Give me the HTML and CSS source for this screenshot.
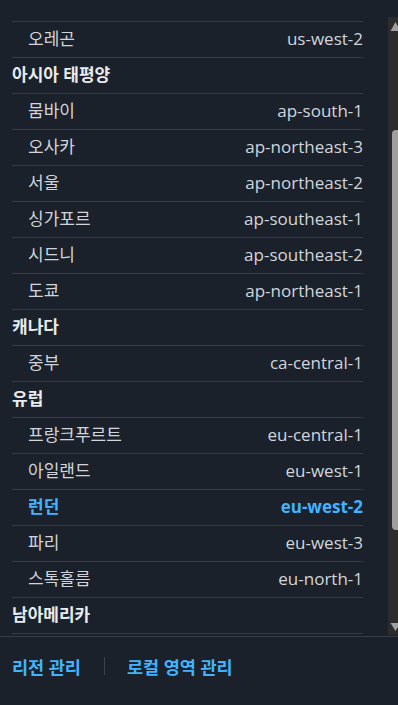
FILE: index.html
```html
<!DOCTYPE html>
<html lang="ko">
<head>
<meta charset="utf-8">
<link rel="stylesheet" href="styles.css">
</head>
<body>
<div class="panel">
  <div class="scroll-area">
    <ul class="list">
      <li class="row item"><span>오레곤</span><span class="code">us-west-2</span></li>
      <li class="row group">아시아 태평양</li>
      <li class="row item"><span>뭄바이</span><span class="code">ap-south-1</span></li>
      <li class="row item"><span>오사카</span><span class="code">ap-northeast-3</span></li>
      <li class="row item"><span>서울</span><span class="code">ap-northeast-2</span></li>
      <li class="row item"><span>싱가포르</span><span class="code">ap-southeast-1</span></li>
      <li class="row item"><span>시드니</span><span class="code">ap-southeast-2</span></li>
      <li class="row item"><span>도쿄</span><span class="code">ap-northeast-1</span></li>
      <li class="row group">캐나다</li>
      <li class="row item"><span>중부</span><span class="code">ca-central-1</span></li>
      <li class="row group">유럽</li>
      <li class="row item"><span>프랑크푸르트</span><span class="code">eu-central-1</span></li>
      <li class="row item"><span>아일랜드</span><span class="code">eu-west-1</span></li>
      <li class="row item selected"><span>런던</span><span class="code">eu-west-2</span></li>
      <li class="row item"><span>파리</span><span class="code">eu-west-3</span></li>
      <li class="row item"><span>스톡홀름</span><span class="code">eu-north-1</span></li>
      <li class="row group last">남아메리카</li>
    </ul>
    <div class="scrollbar">
      <svg class="arrow" width="10" height="16" viewBox="0 0 10 16"><polygon points="7.5,5 2.5,14 12.5,14" fill="#a0a0a0"/></svg>
      <div class="track-gap top-gap"></div>
      <div class="thumb"></div>
      <div class="track-gap"></div>
      <svg class="arrow" width="10" height="16" viewBox="0 0 10 16"><polygon points="2.5,4 12.5,4 7.5,12" fill="#a0a0a0"/></svg>
    </div>
  </div>
  <div class="footer">
    <a class="link">리전 관리</a>
    <span class="divider"></span>
    <a class="link">로컬 영역 관리</a>
  </div>
</div>
</body>
</html>
```

FILE: styles.css
```css
html, body {
  margin: 0;
  padding: 0;
  background: #1b212a;
}
body {
  width: 398px;
  height: 705px;
  overflow: hidden;
  font-family: "Open Sans", "Noto Sans CJK KR", sans-serif;
  font-size: 17px;
  color: #d1d5db;
}
.panel {
  display: flex;
  flex-direction: column;
  height: 705px;
}
.scroll-area {
  display: flex;
  height: 636px;
  padding-left: 12px;
  box-sizing: border-box;
}
.list {
  list-style: none;
  margin: 0;
  padding: 21px 0 0 0;
  width: 351px;
}
.row {
  height: 36px;
  box-sizing: border-box;
  border-top: 1px solid #353c47;
  display: flex;
  align-items: center;
  padding-bottom: 2px;
  line-height: 20px;
}
.row.last {
  border-bottom: 1px solid #353c47;
  height: 37px;
}
.item {
  justify-content: space-between;
  padding-left: 16px;
}
.group {
  font-weight: bold;
  color: #e9ebed;
}
.selected {
  color: #42b4ff;
  font-weight: bold;
}
.scrollbar {
  margin-left: 25px;
  margin-top: 17px;
  margin-bottom: 1px;
  width: 10px;
  background: #2c2c2c;
  display: flex;
  flex-direction: column;
}
.arrow {
  display: block;
  flex: none;
}
.track-gap {
  flex: 1;
}
.top-gap {
  flex: none;
  height: 97px;
}
.thumb {
  flex: none;
  height: 400px;
  margin-left: 4px;
  background: #9f9f9f;
  border-radius: 4px 0 0 4px;
}
.footer {
  border-top: 1px solid #353c47;
  display: flex;
  align-items: center;
  padding: 18px 12px 0 12px;
  height: 22px;
}
.link {
  color: #42b4ff;
  font-weight: bold;
  font-size: 17.5px;
}
.divider {
  width: 1px;
  height: 18px;
  background: #3a424d;
  margin: 0 22px 0 23px;
}
```
